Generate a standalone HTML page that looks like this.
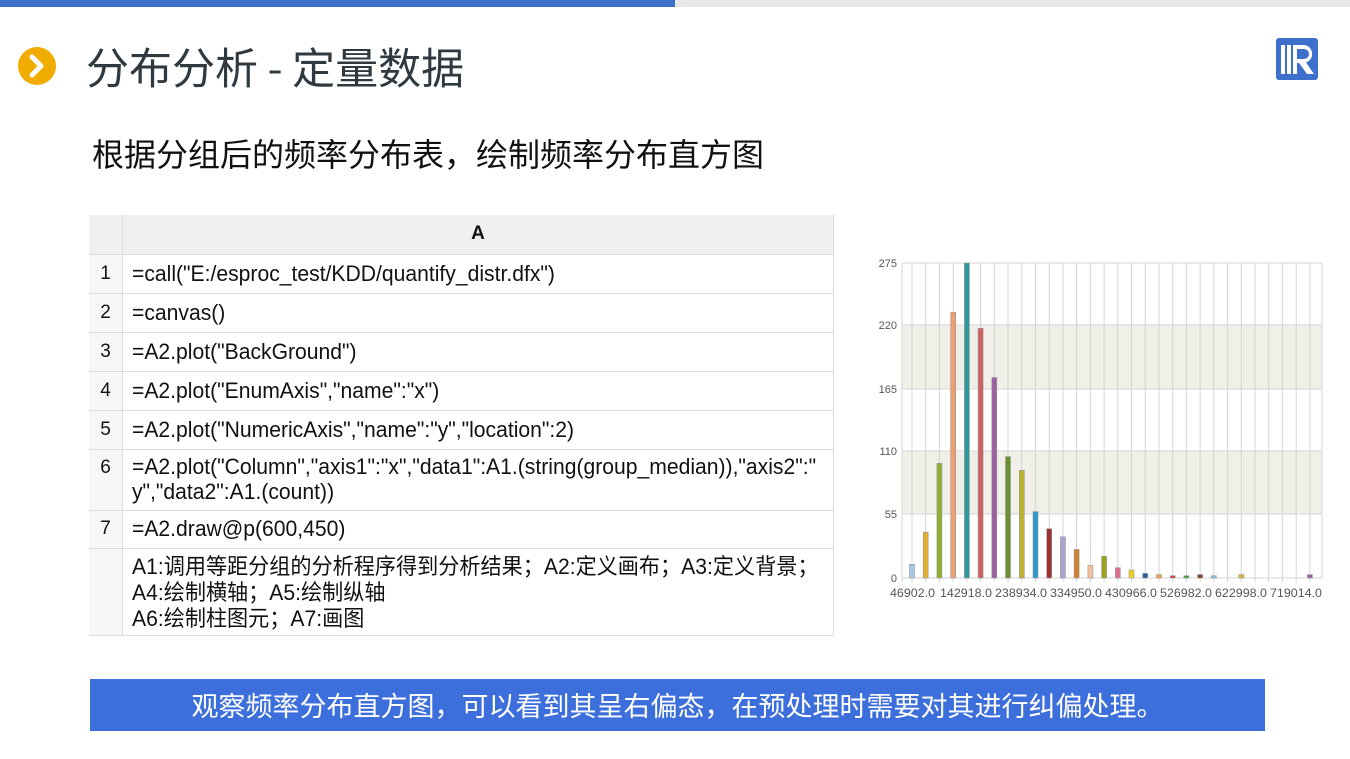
<!DOCTYPE html>
<html><head><meta charset="utf-8"><style>
*{margin:0;padding:0;box-sizing:border-box}
body{width:1350px;height:759px;position:relative;background:#fff;overflow:hidden;font-family:"Liberation Sans","Noto Sans CJK SC",sans-serif}
.abs{position:absolute}
.cell{position:absolute;border-right:1px solid #dcdcdc;border-bottom:1px solid #dcdcdc;font-size:19px;color:#111;white-space:nowrap}
.t{position:absolute;left:9px;font-size:22px;transform:scaleX(0.96);transform-origin:left top;line-height:25px}
</style></head><body>
<div class="abs" style="left:0;top:0;width:675px;height:7px;background:#3d6fcc"></div>
<div class="abs" style="left:675px;top:0;width:675px;height:7px;background:#e8e8e8"></div>
<svg class="abs" style="left:18px;top:47px" width="38" height="38"><circle cx="19" cy="19" r="19" fill="#f0ad00"/><path d="M14 10 L23 19 L14 28" stroke="#fff" stroke-width="5" fill="none" stroke-linecap="round" stroke-linejoin="round"/></svg>
<div class="abs" style="left:86px;top:37px;font-size:43px;color:#2f3a40;line-height:58px;font-family:'Noto Sans CJK SC',sans-serif;letter-spacing:0px">分布分析 - 定量数据</div>
<svg class="abs" style="left:1276px;top:38px" width="42" height="42"><rect width="42" height="42" rx="3" fill="#3d6fcc"/><rect x="5" y="7" width="4" height="29" fill="#fff"/><rect x="11" y="7" width="4" height="29" fill="#fff"/><path d="M17 7 H28 A9 9 0 0 1 30 24.5 L38 36 H31 L23 25 H21 V36 H17 Z M21 11 V21 H28 A5 5 0 0 0 28 11 Z" fill="#fff" fill-rule="evenodd"/></svg>
<div class="abs" style="left:92px;top:131px;font-size:32px;color:#111;line-height:44px;font-family:'Noto Sans CJK SC',sans-serif">根据分组后的频率分布表，绘制频率分布直方图</div>

<div class="abs" style="left:89px;top:215px;width:745px;height:421px;border-left:1px solid #dcdcdc;border-top:1px solid #dcdcdc"></div>
<div class="cell" style="left:89px;top:215px;width:34px;height:40px;background:#f0f0f0"></div>
<div class="cell" style="left:123px;top:215px;width:711px;height:40px;background:#f0f0f0;text-align:center;font-weight:bold;line-height:38px">A</div>

<div class="cell" style="left:89px;top:255px;width:34px;height:39px;background:#f7f7f7;text-align:center;line-height:38px">1</div>
<div class="cell" style="left:123px;top:255px;width:711px;height:39px"><span class="t" style="top:6px">=call("E:/esproc_test/KDD/quantify_distr.dfx")</span></div>
<div class="cell" style="left:89px;top:294px;width:34px;height:39px;background:#f7f7f7;text-align:center;line-height:38px">2</div>
<div class="cell" style="left:123px;top:294px;width:711px;height:39px"><span class="t" style="top:6px">=canvas()</span></div>
<div class="cell" style="left:89px;top:333px;width:34px;height:39px;background:#f7f7f7;text-align:center;line-height:38px">3</div>
<div class="cell" style="left:123px;top:333px;width:711px;height:39px"><span class="t" style="top:6px">=A2.plot("BackGround")</span></div>
<div class="cell" style="left:89px;top:372px;width:34px;height:39px;background:#f7f7f7;text-align:center;line-height:38px">4</div>
<div class="cell" style="left:123px;top:372px;width:711px;height:39px"><span class="t" style="top:6px">=A2.plot("EnumAxis","name":"x")</span></div>
<div class="cell" style="left:89px;top:411px;width:34px;height:39px;background:#f7f7f7;text-align:center;line-height:38px">5</div>
<div class="cell" style="left:123px;top:411px;width:711px;height:39px"><span class="t" style="top:6px">=A2.plot("NumericAxis","name":"y","location":2)</span></div>
<div class="cell" style="left:89px;top:450px;width:34px;height:61px;background:#f7f7f7;text-align:center;line-height:36px">6</div>
<div class="cell" style="left:123px;top:450px;width:711px;height:61px"><span class="t" style="top:4px">=A2.plot("Column","axis1":"x","data1":A1.(string(group_median)),"axis2":"<br>y","data2":A1.(count))</span></div>
<div class="cell" style="left:89px;top:511px;width:34px;height:38px;background:#f7f7f7;text-align:center;line-height:36px">7</div>
<div class="cell" style="left:123px;top:511px;width:711px;height:38px"><span class="t" style="top:5px">=A2.draw@p(600,450)</span></div>
<div class="cell" style="left:89px;top:549px;width:34px;height:87px;background:#f7f7f7"></div>
<div class="cell" style="left:123px;top:549px;width:711px;height:87px"><span class="t" style="top:5px;line-height:26px">A1:调用等距分组的分析程序得到分析结果；A2:定义画布；A3:定义背景；<br>A4:绘制横轴；A5:绘制纵轴<br>A6:绘制柱图元；A7:画图</span></div>

<svg class="abs" style="left:860px;top:250px" width="480" height="360" viewBox="860 250 480 360">
<rect x="902" y="325" width="420" height="64" fill="#f0f0e8"/>
<rect x="902" y="451" width="420" height="63" fill="#f0f0e8"/>
<g stroke="#d4d4d4" stroke-width="1">
<line x1="902" y1="263" x2="1322" y2="263"/><line x1="902" y1="325" x2="1322" y2="325"/><line x1="902" y1="389" x2="1322" y2="389"/><line x1="902" y1="451" x2="1322" y2="451"/><line x1="902" y1="514" x2="1322" y2="514"/><line x1="902" y1="578" x2="1322" y2="578"/>
<line x1="902" y1="263" x2="902" y2="582"/><line x1="1322" y1="263" x2="1322" y2="578"/>
<line x1="912" y1="263" x2="912" y2="582"/><line x1="925.7" y1="263" x2="925.7" y2="582"/><line x1="939.4" y1="263" x2="939.4" y2="582"/><line x1="953.2" y1="263" x2="953.2" y2="582"/><line x1="966.9" y1="263" x2="966.9" y2="582"/><line x1="980.6" y1="263" x2="980.6" y2="582"/><line x1="994.3" y1="263" x2="994.3" y2="582"/><line x1="1008" y1="263" x2="1008" y2="582"/><line x1="1021.8" y1="263" x2="1021.8" y2="582"/><line x1="1035.5" y1="263" x2="1035.5" y2="582"/><line x1="1049.2" y1="263" x2="1049.2" y2="582"/><line x1="1062.9" y1="263" x2="1062.9" y2="582"/><line x1="1076.6" y1="263" x2="1076.6" y2="582"/><line x1="1090.4" y1="263" x2="1090.4" y2="582"/><line x1="1104.1" y1="263" x2="1104.1" y2="582"/><line x1="1117.8" y1="263" x2="1117.8" y2="582"/><line x1="1131.5" y1="263" x2="1131.5" y2="582"/><line x1="1145.2" y1="263" x2="1145.2" y2="582"/><line x1="1159" y1="263" x2="1159" y2="582"/><line x1="1172.7" y1="263" x2="1172.7" y2="582"/><line x1="1186.4" y1="263" x2="1186.4" y2="582"/><line x1="1200.1" y1="263" x2="1200.1" y2="582"/><line x1="1213.8" y1="263" x2="1213.8" y2="582"/><line x1="1227.6" y1="263" x2="1227.6" y2="582"/><line x1="1241.3" y1="263" x2="1241.3" y2="582"/><line x1="1255" y1="263" x2="1255" y2="582"/><line x1="1268.7" y1="263" x2="1268.7" y2="582"/><line x1="1282.4" y1="263" x2="1282.4" y2="582"/><line x1="1296.2" y1="263" x2="1296.2" y2="582"/><line x1="1309.9" y1="263" x2="1309.9" y2="582"/>
</g>
<g stroke="#999" stroke-width="0.6">
<rect x="909.5" y="564.3" width="5" height="13.7" fill="#a6c8e8"/>
<rect x="923.2" y="532.2" width="5" height="45.8" fill="#e0b030"/>
<rect x="936.9" y="463.4" width="5" height="114.6" fill="#8cb030"/>
<rect x="950.7" y="312.2" width="5" height="265.8" fill="#f0a070"/>
<rect x="964.4" y="263" width="5" height="315" fill="#2a9a9a"/>
<rect x="978.1" y="328.3" width="5" height="249.7" fill="#d06060"/>
<rect x="991.8" y="377.5" width="5" height="200.5" fill="#9a60a0"/>
<rect x="1005.5" y="456.6" width="5" height="121.4" fill="#6a9030"/>
<rect x="1019.3" y="470.3" width="5" height="107.7" fill="#c0b030"/>
<rect x="1033" y="511.6" width="5" height="66.4" fill="#2a9ad0"/>
<rect x="1046.7" y="528.7" width="5" height="49.3" fill="#a03030"/>
<rect x="1060.4" y="536.8" width="5" height="41.2" fill="#b0a0d0"/>
<rect x="1074.1" y="549.4" width="5" height="28.6" fill="#d08030"/>
<rect x="1087.9" y="565.4" width="5" height="12.6" fill="#f0c0a0"/>
<rect x="1101.6" y="556.2" width="5" height="21.8" fill="#a0a020"/>
<rect x="1115.3" y="567.7" width="5" height="10.3" fill="#e07090"/>
<rect x="1129" y="570" width="5" height="8" fill="#f0d020"/>
<rect x="1142.7" y="573.4" width="5" height="4.6" fill="#2060a0"/>
<rect x="1156.5" y="574.6" width="5" height="3.4" fill="#f0a040"/>
<rect x="1170.2" y="575.7" width="5" height="2.3" fill="#e04040"/>
<rect x="1183.9" y="575.7" width="5" height="2.3" fill="#40a040"/>
<rect x="1197.6" y="574.6" width="5" height="3.4" fill="#804020"/>
<rect x="1211.3" y="575.7" width="5" height="2.3" fill="#80c0e0"/>
<rect x="1238.8" y="574.6" width="5" height="3.4" fill="#e0b030"/>
<rect x="1307.4" y="574.6" width="5" height="3.4" fill="#9a60a0"/>
</g>
<g font-family="Liberation Sans, sans-serif" font-size="11" fill="#555" text-anchor="end">
<text x="897" y="267">275</text><text x="897" y="329">220</text><text x="897" y="393">165</text><text x="897" y="455">110</text><text x="897" y="518">55</text><text x="897" y="582">0</text>
</g>
<g font-family="Liberation Sans, sans-serif" font-size="12" fill="#555">
<text x="890" y="597" textLength="45" lengthAdjust="spacingAndGlyphs">46902.0</text>
<text x="940" y="597" textLength="52" lengthAdjust="spacingAndGlyphs">142918.0</text>
<text x="995" y="597" textLength="52" lengthAdjust="spacingAndGlyphs">238934.0</text>
<text x="1050" y="597" textLength="52" lengthAdjust="spacingAndGlyphs">334950.0</text>
<text x="1105" y="597" textLength="52" lengthAdjust="spacingAndGlyphs">430966.0</text>
<text x="1160" y="597" textLength="52" lengthAdjust="spacingAndGlyphs">526982.0</text>
<text x="1215" y="597" textLength="52" lengthAdjust="spacingAndGlyphs">622998.0</text>
<text x="1270" y="597" textLength="52" lengthAdjust="spacingAndGlyphs">719014.0</text>
</g>
</svg>

<div class="abs" style="left:90px;top:679px;width:1175px;height:52px;background:#3d6fdc;color:#fff;font-size:27px;text-align:center;line-height:52px;font-family:'Noto Sans CJK SC',sans-serif">观察频率分布直方图，可以看到其呈右偏态，在预处理时需要对其进行纠偏处理。</div>
</body></html>
